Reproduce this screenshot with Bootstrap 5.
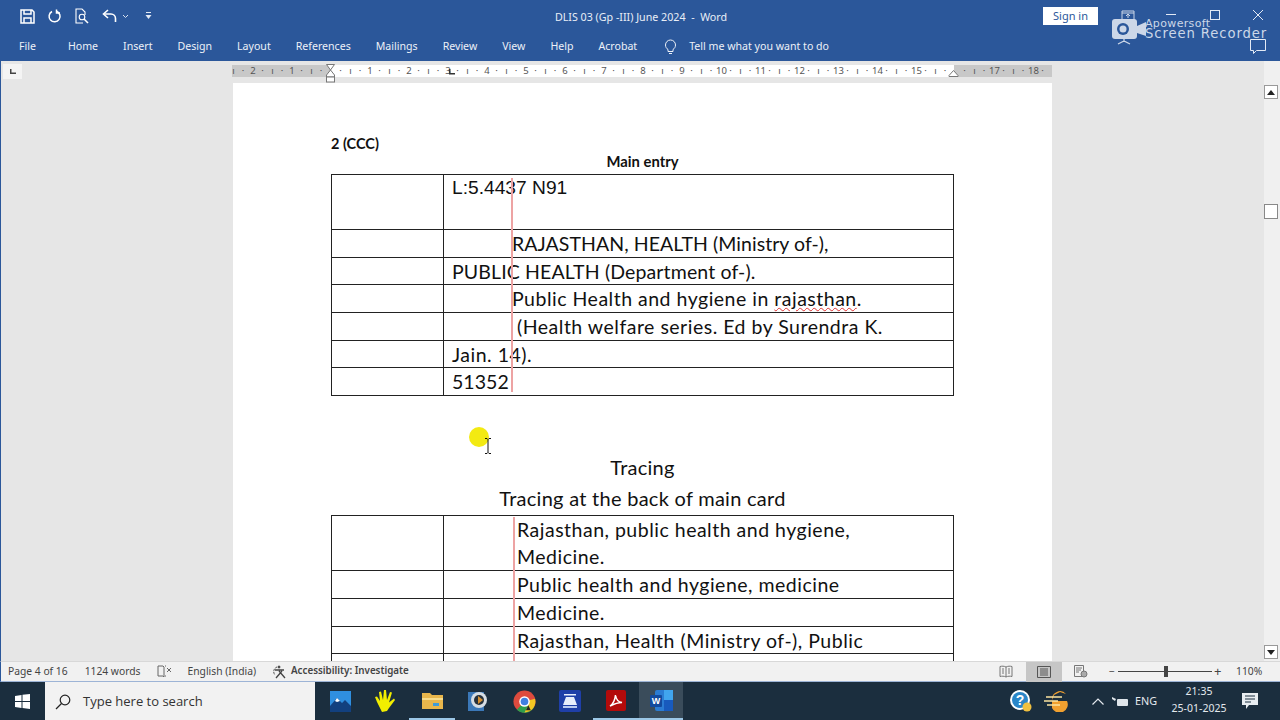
<!DOCTYPE html>
<html lang="en">
<head>
<title>DLIS 03 (Gp -III) June 2024 - Word</title>
<link href="https://cdn.jsdelivr.net/npm/bootstrap@5.3.0/dist/css/bootstrap.min.css" rel="stylesheet">
<style>
html, body { height: 100%; overflow: hidden; }
body { font-family: "Noto Sans", sans-serif; background: #e6e6e6; }
.app-shell { width: 1280px; height: 720px; position: relative; overflow: hidden; }
.title-strip { height: 32px; background: #2b579a; color: #fff; }
.qat { width: 400px; padding-left: 20px; gap: 12px; }
.doc-title { font-size: 10.7px; color: #e8eef7; flex: 1; text-align: center; padding-top: 3px; padding-left: 2px; }
.title-right { width: 400px; padding-left: 163px; }
.signin-btn { background: #fff; color: #2b579a; font-size: 11px; line-height: 18px; width: 55px; text-align: center; }
.tab-strip { height: 29px; background: #2b579a; color: #edf1f8; font-size: 10.6px; padding-left: 19px; gap: 25px; }
.tab-strip .file-tab { margin-right: 7px; }
.tell-me { margin-left: 2px; gap: 12px; }
.work-area { height: 600px; background: #e6e6e6; border-left: 1px solid #2b579a; }
.left-gutter { width: 231px; flex: none; }
.tab-picker { width: 19px; height: 15px; margin: 3px 0 0 2px; background: #f4f4f4; }
.doc-col { width: 820px; flex: none; position: relative; }
.ruler-band { height: 12px; margin-top: 4px; overflow: hidden; display: flex; color: #555; font-size: 9.5px; line-height: 12px; background: linear-gradient(to right, #c8c8c8 99px, #fff 99px, #fff 722px, #c8c8c8 722px); }
.ruler-unit { width: 9.765px; flex: none; text-align: center; }
.ruler-first { margin-left: -3.5px; }
.ruler-mark { position: absolute; }
.mark-first { left: 93px; top: 3px; }
.mark-tab { left: 216px; top: 8px; }
.mark-right { left: 716px; top: 9px; }
.sheet { background: #fff; margin-top: 6px; height: 578px; margin-left: 1px; width: 819px; padding: 53px 98px 0 98px; overflow: hidden; color: #111; font-family: Lato, sans-serif; }
.head-note { font-size: 14.5px; font-weight: 700; line-height: 15px; }
.main-head { font-size: 14.8px; font-weight: 700; line-height: 20px; text-align: center; margin-bottom: 3px; }
.card-wrap { position: relative; width: 623px; }
.card-table { width: 623px; table-layout: fixed; margin: 0; border-collapse: collapse; font-size: 19.5px; letter-spacing: .5px; }
.card-table td { border: 1px solid #222; padding: 2px 8px 0; height: 27.7px; line-height: 24px; vertical-align: top; white-space: nowrap; background: transparent; }
.card-table .col-blank { width: 112px; }
.card-table .tall-row td { height: 54px; padding-top: 0; line-height: 27px; }
.card-table .first-row td { height: 55px; padding-top: 0; }
.card-table .clip-row td { padding-top: 3px; }
.mono-line { font-family: "Liberation Sans", sans-serif; font-size: 19.2px; letter-spacing: 0; }
.caps-line { letter-spacing: .05px; }
.caps-line-b { letter-spacing: .13px; }
.card-table td.pad-a { padding-left: 68px; }
.card-table td.pad-b { padding-left: 73px; }
.spell-mark { text-decoration: underline wavy #d33 1px; }
.red-rule { position: absolute; width: 2px; background: #eda3a3; z-index: 2; }
.red-one { left: 180px; top: 4px; bottom: 4px; }
.red-two { left: 182px; top: 2px; bottom: 0; }
.trace-head { font-size: 20px; line-height: 30px; text-align: center; letter-spacing: .27px; }
.trace-one { margin-top: 56px; }
.trace-two { margin-bottom: 2px; margin-top: 1px; }
.scroll-col { width: 17px; margin-left: auto; padding: 24px 1px 2px 1px; background: linear-gradient(to right, #e6e6e6 1px, #f0f0f0 1px); }
.scroll-btn { height: 14px; width: 14px; background: #fff; border: 1px solid #999; }
.scroll-thumb { height: 15px; width: 14px; background: #fff; border: 1px solid #888; margin-top: 105px; }
.status-strip { height: 21px; background: #f1f1f1; border-top: 1px solid #d8d8d8; border-bottom: 1px solid #9db4d6; border-left: 1px solid #2b579a; color: #444; font-size: 10.3px; padding-left: 7px; padding-right: 4px; }
.status-gap-a { margin-left: 17px; }
.status-gap-b { margin-left: 16px; }
.access-label { font-size: 9.8px; font-weight: 600; margin-left: 3px; }
.view-active { background: #c6c6c6; width: 36px; height: 20px; margin-left: 13px; }
.view-web { margin-left: 12px; }
.zoom-minus { margin-left: 21px; width: 9px; }
.zoom-line { width: 94px; height: 1px; background: #444; position: relative; }
.zoom-thumb { position: absolute; left: 46px; top: -5px; width: 4px; height: 11px; background: #444; }
.zoom-plus { margin-left: 2px; width: 22px; font-size: 13px; }
.zoom-value { width: 40px; }
.task-strip { height: 38px; background: #1b2e3e; color: #e4e9ee; }
.start-slot { width: 45px; }
.search-box { width: 270px; height: 38px; background: #f2f2f2; color: #333; font-size: 13px; gap: 12px; padding: 1px 0 0 10px; margin-right: 2px; font-family: "Open Sans", sans-serif; }
.task-icon { width: 46px; height: 38px; }
.task-run { border-bottom: 2px solid #9cc7e6; }
.task-word { width: 44px; background: #3a4c5b; border-bottom: 2px solid #9cc7e6; }
.tray-orange { margin-left: 11px; }
.tray-caret { margin-left: 24px; }
.tray-net { margin-left: 8px; }
.tray-eng { font-size: 10.8px; margin-left: 7px; }
.tray-clock { font-size: 10.5px; line-height: 17px; text-align: center; width: 72px; margin-left: 6px; padding-bottom: 2px; }
.tray-note { margin-left: 7px; margin-right: 22px; }
.cursor-spot { position: absolute; left: 469px; top: 427px; width: 20px; height: 20px; border-radius: 50%; background: #f3ea12; }
.cursor-beam { position: absolute; left: 484px; top: 438px; }
.rec-mark { position: absolute; left: 1110px; top: 8px; color: #ccd7e8; }
.rec-icon { position: absolute; left: 0; top: 0; }
.rec-top { position: absolute; left: 35px; top: 11px; font-size: 11px; letter-spacing: .35px; line-height: 9px; font-family: "DejaVu Sans", sans-serif; }
.rec-bottom { position: absolute; left: 35px; top: 20px; font-size: 13.2px; letter-spacing: .9px; line-height: 12px; white-space: nowrap; font-family: "DejaVu Sans", sans-serif; }
.win-btns { position: absolute; left: 1164px; top: 8px; }
</style>
</head>
<body>
<div class="app-shell d-flex flex-column">

  <div class="title-strip d-flex align-items-center">
    <div class="qat d-flex align-items-center">
      <svg width="15" height="15" viewBox="0 0 15 15" fill="none" stroke="#fff" stroke-width="1.5"><path d="M1 1h11l2 2v11H1z"/><path d="M4 1v4h7V1M4 14V9h7v5"/></svg>
      <svg width="15" height="15" viewBox="0 0 15 15" fill="none" stroke="#fff" stroke-width="1.5"><path d="M5 2.500a5.500 5.500 0 1 0 4.500-.3"/><path d="M9.500 0.500v3.500h3.500"/></svg>
      <svg width="16" height="16" viewBox="0 0 16 16" fill="none" stroke="#fff" stroke-width="1.1"><path d="M9 15H2V1h6l3 3v3"/><circle cx="8" cy="9" r="2.800"/><path d="M10 11l4 4" stroke-width="1.600"/></svg>
      <div class="d-flex align-items-center gap-1">
        <svg width="16" height="14" viewBox="0 0 16 14" fill="none" stroke="#fff" stroke-width="1.6"><path d="M6 1L1.500 5 6 9"/><path d="M2 5h7a4.500 4.500 0 0 1 4.500 4.500V13"/></svg>
        <svg width="7" height="5" viewBox="0 0 7 5" fill="none" stroke="#d8e2f0"><path d="M1 1l2.500 2.500L6 1"/></svg>
      </div>
      <svg class="ms-1" width="7" height="8" viewBox="0 0 7 8" fill="#e3eaf5"><rect x="1" y="0" width="5" height="1"/><path d="M.500 3h6L3.500 7z"/></svg>
    </div>
    <div class="doc-title">DLIS 03 (Gp -III) June 2024 &nbsp;-&nbsp; Word</div>
    <div class="title-right">
      <div class="signin-btn">Sign in</div>
    </div>
  </div>

  <div class="tab-strip d-flex align-items-center">
    <span class="file-tab">File</span><span>Home</span><span>Insert</span><span>Design</span><span>Layout</span><span>References</span><span>Mailings</span><span>Review</span><span>View</span><span>Help</span><span>Acrobat</span>
    <span class="tell-me d-flex align-items-center">
      <svg width="13" height="15" viewBox="0 0 13 15" fill="none" stroke="#edf1f8"><path d="M4 10.500C2.500 9.500 1.500 8 1.500 6a5 5 0 0 1 10 0c0 2-1 3.500-2.500 4.500v2H4z"/><path d="M5 14.500h3"/></svg>
      <span>Tell me what you want to do</span>
    </span>
  </div>

  <div class="work-area d-flex">
    <div class="left-gutter">
      <div class="tab-picker d-flex align-items-center justify-content-center">
        <svg width="6" height="5" viewBox="0 0 6 5" fill="#444"><path d="M0 0h1.500v3.500H6V5H0z"/></svg>
      </div>
    </div>
    <div class="doc-col">
      <div class="ruler-band" id="rulerBand"></div>
      <svg class="ruler-mark mark-first" width="12" height="19" viewBox="0 0 12 19" fill="#fff" stroke="#777"><path d="M1.500.500h8L5.500 6zM5.500 6l4 5v2h-8v-2z"/><rect x="1.500" y="13" width="8" height="5"/></svg>
      <svg class="ruler-mark mark-tab" width="8" height="7" viewBox="0 0 8 7" fill="#333"><path d="M1 0h1.500v4H7v1.500H1z"/></svg>
      <svg class="ruler-mark mark-right" width="11" height="7" viewBox="0 0 11 7" fill="#fff" stroke="#777"><path d="M5.500.500l4.500 5v1H1v-1z"/></svg>
      <div class="sheet">
        <div class="head-note">2 (CCC)</div>
        <div class="main-head">Main entry</div>
        <div class="card-wrap">
          <table class="card-table">
            <colgroup><col class="col-blank"><col></colgroup>
            <tr class="first-row"><td></td><td><span class="mono-line">L:5.4437 N91</span></td></tr>
            <tr><td></td><td class="pad-a caps-line">RAJASTHAN, HEALTH (Ministry of-),</td></tr>
            <tr><td></td><td class="caps-line-b">PUBLIC HEALTH (Department of-).</td></tr>
            <tr><td></td><td class="pad-a">Public Health and hygiene in <span class="spell-mark">rajasthan</span>.</td></tr>
            <tr><td></td><td class="pad-b">(Health welfare series. Ed by Surendra K.</td></tr>
            <tr><td></td><td>Jain. 14).</td></tr>
            <tr><td></td><td class="caps-line">51352</td></tr>
          </table>
          <div class="red-rule red-one"></div>
        </div>
        <div class="trace-head trace-one">Tracing</div>
        <div class="trace-head trace-two">Tracing at the back of main card</div>
        <div class="card-wrap">
          <table class="card-table">
            <colgroup><col class="col-blank"><col></colgroup>
            <tr class="tall-row"><td></td><td class="pad-b">Rajasthan, public health and hygiene,<br>Medicine.</td></tr>
            <tr><td></td><td class="pad-b">Public health and hygiene, medicine</td></tr>
            <tr><td></td><td class="pad-b">Medicine.</td></tr>
            <tr><td></td><td class="pad-b">Rajasthan, Health (Ministry of-), Public</td></tr>
            <tr class="clip-row"><td></td><td class="pad-b">Health (Department of-).</td></tr>
          </table>
          <div class="red-rule red-two"></div>
        </div>
      </div>
    </div>
    <div class="scroll-col d-flex flex-column">
      <div class="scroll-btn d-flex align-items-center justify-content-center"><svg width="8" height="5" viewBox="0 0 8 5" fill="#222"><path d="M4 0l4 5H0z"/></svg></div>
      <div class="scroll-thumb"></div>
      <div class="scroll-btn mt-auto d-flex align-items-center justify-content-center"><svg width="8" height="5" viewBox="0 0 8 5" fill="#222"><path d="M0 0h8L4 5z"/></svg></div>
    </div>
  </div>

  <div class="status-strip d-flex align-items-center">
    <span>Page 4 of 16</span>
    <span class="status-gap-a">1124 words</span>
    <svg class="ms-3" width="15" height="13" viewBox="0 0 15 13" fill="none" stroke="#666"><path d="M1 1h5l1 1v10l-1-1H1z"/><path d="M9 11h-1M9 1H8"/><path d="M10 3l4 4M14 3l-4 4"/></svg>
    <span class="status-gap-b">English (India)</span>
    <svg class="status-gap-b" width="16" height="14" viewBox="0 0 16 14" fill="none" stroke="#444"><path d="M5 2a5 5 0 0 0-2 8" stroke-dasharray="2 1"/><circle cx="7" cy="2" r="1" fill="#444"/><path d="M3 5l9 0M7 6l6 7M10 6l-6 7" stroke-width="1.300"/></svg>
    <span class="access-label">Accessibility: Investigate</span>
    <div class="d-flex align-items-center ms-auto">
      <svg width="14" height="13" viewBox="0 0 14 13" fill="none" stroke="#777"><path d="M7 2C5 1 3 1 1 1.500v10c2-.5 4-.5 6 .5 2-1 4-1 6-.5v-10C11 1 9 1 7 2zM7 2v10M3 4h2M3 6h2M3 8h2M9 4h2M9 6h2M9 8h2"/></svg>
      <div class="view-active d-flex align-items-center justify-content-center">
        <svg width="14" height="12" viewBox="0 0 14 12" fill="none" stroke="#555"><path d="M.500.500h13v11H.500zM3 3h8M3 5h8M3 7h8M3 9h8"/></svg>
      </div>
      <svg class="view-web" width="14" height="13" viewBox="0 0 14 13" fill="none" stroke="#777"><path d="M.500.500h9v11h-9zM2 3h6M2 5h5M2 7h3"/><circle cx="10" cy="9" r="3" fill="#aaa"/></svg>
      <span class="zoom-minus">−</span>
      <div class="zoom-line"><div class="zoom-thumb"></div></div>
      <span class="zoom-plus">+</span>
      <span class="zoom-value">110%</span>
    </div>
  </div>

  <div class="task-strip d-flex align-items-center">
    <div class="start-slot d-flex justify-content-center">
      <svg width="15" height="15" viewBox="0 0 15 15" fill="#fff"><path d="M0 2l6.500-1v6H0zM7.500.800L15 0v7H7.500zM0 8h6.500v6L0 13zM7.500 8H15v7l-7.500-1z"/></svg>
    </div>
    <div class="search-box d-flex align-items-center">
      <svg width="16" height="16" viewBox="0 0 16 16" fill="none" stroke="#222" stroke-width="1.200"><circle cx="10" cy="6" r="4.800"/><path d="M6.500 9.500L1 15"/></svg>
      <span>Type here to search</span>
    </div>
    <div class="task-icon d-flex align-items-center justify-content-center">
      <svg width="21" height="21" viewBox="0 0 21 21"><rect width="21" height="21" fill="#2f8fe0"/><path d="M0 15l7-8 5 5 3-3 6 6v6H0z" fill="#12407f"/><path d="M7 7l3 3-3 1-2-1z" fill="#fff"/></svg>
    </div>
    <div class="task-icon d-flex align-items-center justify-content-center">
      <svg width="22" height="23" viewBox="0 0 22 23" fill="#f2ee00"><path d="M7 22L2 12 0 7l2-.5L5 11 4 2l2-.5L8 10l1-10h2l1 10 3-8 2 .5-3 10 5-4 1 1.500-6 8-2 3z"/></svg>
    </div>
    <div class="task-icon task-run d-flex align-items-center justify-content-center">
      <svg width="21" height="18" viewBox="0 0 21 18"><path d="M0 2h8l2 2h11v14H0z" fill="#e8b64c"/><path d="M0 7h21v2H0z" fill="#f8dc8a"/><path d="M11 12h6v3h-6z" fill="#3f9bd8"/></svg>
    </div>
    <div class="task-icon d-flex align-items-center justify-content-center">
      <svg width="20" height="22" viewBox="0 0 20 22"><rect x="0" y="2" width="16" height="19" fill="#3b78b8"/><circle cx="11" cy="10" r="8" fill="#d7dde3"/><circle cx="11" cy="10" r="5" fill="#27323c"/><path d="M10 6l5 4-5 4z" fill="#d89030"/></svg>
    </div>
    <div class="task-icon d-flex align-items-center justify-content-center">
      <svg width="23" height="23" viewBox="0 0 24 24"><circle cx="12" cy="12" r="11.500" fill="#dd4b3e"/><path d="M12 12L22 18A11.500 11.500 0 0 1 4 20.500z" fill="#2f9e4c"/><path d="M12 12L23 9A11.500 11.500 0 0 1 12 23.500L17 14z" fill="#f3c623"/><circle cx="12" cy="12" r="5.500" fill="#fff"/><circle cx="12" cy="12" r="4" fill="#3f7fe0"/><path d="M16 16l2.500 5h-5z" fill="#222"/></svg>
    </div>
    <div class="task-icon d-flex align-items-center justify-content-center">
      <svg width="22" height="22" viewBox="0 0 22 22"><rect width="22" height="22" rx="2" fill="#1f3fa8"/><path d="M5 4h12v1.500H5zM7 7h8l3 8H4z" fill="#e8eefc"/><path d="M4 16h14v2H4z" fill="#b9c9f0"/></svg>
    </div>
    <div class="task-icon task-run d-flex align-items-center justify-content-center">
      <svg width="20" height="21" viewBox="0 0 20 21"><rect width="20" height="21" rx="2" fill="#b30b0b"/><path d="M4 16c3-2 5-6 5.500-11 .5 4 3 7 6.500 7.500-4 0-7 1-12 3.500z" fill="none" stroke="#fff" stroke-width="1.500"/></svg>
    </div>
    <div class="task-icon task-word d-flex align-items-center justify-content-center">
      <svg width="23" height="21" viewBox="0 0 23 21"><rect x="5" width="18" height="21" rx="2" fill="#2b7cd3"/><rect x="14" y="0" width="9" height="10" fill="#41a5ee"/><rect x="14" y="10" width="9" height="11" fill="#185abd"/><rect x="0" y="5" width="12" height="12" rx="1" fill="#124a9e"/><text x="6" y="14" font-size="9" font-weight="700" text-anchor="middle" fill="#fff" font-family="Liberation Sans, sans-serif">W</text></svg>
    </div>
    <div class="d-flex align-items-center ms-auto">
      <svg width="24" height="24" viewBox="0 0 24 24"><circle cx="11" cy="11" r="10" fill="#fff"/><circle cx="11" cy="11" r="8" fill="#2a86c8"/><text x="11" y="16" font-size="14" font-weight="700" text-anchor="middle" fill="#fff" font-family="Liberation Sans, sans-serif">?</text><circle cx="18" cy="18" r="4.500" fill="#f0c040"/></svg>
      <svg class="tray-orange" width="24" height="22" viewBox="0 0 24 22"><path d="M8 11h15a8 8 0 0 1-15 7zM8 10a8 8 0 0 1 14-6L16 2l-6 3z" fill="#f0a030"/><path d="M2 7h16M0 11h14M3 15h13" stroke="#fbe3a0" stroke-width="1.600"/></svg>
      <svg class="tray-caret" width="12" height="7" viewBox="0 0 12 7" fill="none" stroke="#e4e9ee" stroke-width="1.200"><path d="M.500 6.500L6 1l5.500 5.500"/></svg>
      <svg class="tray-net" width="16" height="11" viewBox="0 0 16 11" fill="#dfe5ea"><rect x="5" y="3" width="11" height="7" rx="1"/><path d="M0 1l4 2-1 2L0 3z"/></svg>
      <span class="tray-eng">ENG</span>
      <div class="tray-clock">21:35<br>25-01-2025</div>
      <svg class="tray-note" width="16" height="17" viewBox="0 0 16 17"><path d="M0 0h16v12H7l-3 4v-4H0z" fill="#e8edf1"/><path d="M3 3h10M3 6h10M3 9h6" stroke="#1b2e3e"/></svg>
    </div>
  </div>

  <!-- things that sit over the window -->
  <div class="rec-mark">
    <svg class="rec-icon" width="38" height="38" viewBox="0 0 38 38">
      <path d="M12 3h12v9H12zM12 5h12M18 10V7M16 8l2-2 2 2" fill="none" stroke="#ccd7e8"/>
      <rect x="2" y="11" width="25" height="20" rx="3" fill="#ccd7e8"/><path d="M27 18l9-4v14l-9-3z" fill="#ccd7e8"/>
      <circle cx="13" cy="21" r="6" fill="#2b579a"/><circle cx="13" cy="21" r="3.500" fill="#ccd7e8"/>
      <path d="M14 31v3M8 36l6-3 6 3" fill="none" stroke="#ccd7e8" stroke-width="1.300"/>
    </svg>
    <span class="rec-top">Apowersoft</span>
    <span class="rec-bottom">Screen Recorder</span>
  </div>
  <svg class="win-btns" width="102" height="46" viewBox="0 0 102 46" fill="none" stroke="#e3eaf5">
    <path d="M2 6.500h10"/><rect x="46.500" y="2.500" width="9" height="9"/><path d="M89 2l10 10M99 2L89 12"/>
    <path d="M86.500 31.500h15v11h-9l-3 3v-3h-3z"/>
  </svg>
  <div class="cursor-spot"></div>
  <svg class="cursor-beam" width="8" height="16" viewBox="0 0 8 16" fill="none" stroke="#111"><path d="M1 .500h2l1 1 1-1h2M4 1.500v13M1 15.500h2l1-1 1 1h2"/></svg>
</div>
<script>
  // ruler: one unit is a quarter of a cm, number on every 4th
  const band = document.getElementById('rulerBand');
  for (let i = -10; i < 74; i++) {
    const u = document.createElement('span');
    u.className = 'ruler-unit' + (i === -10 ? ' ruler-first' : '');
    if (i === 0 || i === 64) u.textContent = '';
    else if (i % 4 === 0) u.textContent = Math.abs(i / 4);
    else if (i % 2 === 0) u.textContent = 'ı';
    else u.textContent = '·';
    band.appendChild(u);
  }
</script>
<script src="https://cdn.jsdelivr.net/npm/bootstrap@5.3.0/dist/js/bootstrap.bundle.min.js"></script>
</body>
</html>
